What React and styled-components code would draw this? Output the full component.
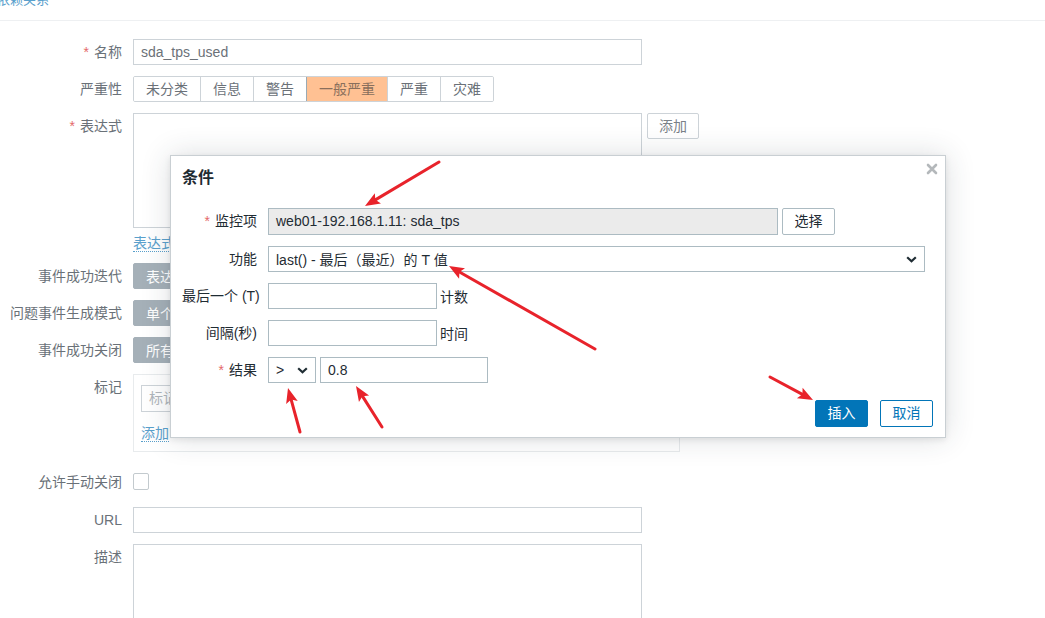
import React from 'react'
import styled, { createGlobalStyle } from 'styled-components'

const GlobalStyle = createGlobalStyle`
  html, body { margin: 0; padding: 0; background: #fff; }
  body {
    font-family: "Liberation Sans", "Noto Sans CJK SC", sans-serif;
    font-size: 14px;
    overflow: hidden;
  }
  * { box-sizing: border-box; }
`

const Page = styled.div`
  position: relative;
  width: 1045px;
  height: 618px;
  overflow: hidden;
`

const TabBar = styled.div`
  height: 21px;
  border-bottom: 1px solid #eef0f2;
  overflow: hidden;
`

const Tab = styled.a`
  display: block;
  margin: -9px 0 0 -3px;
  font-size: 13px;
  line-height: 18px;
  color: #5aa0cc;
`

const Form = styled.div`
  display: flex;
  flex-direction: column;
  gap: 11px;
  padding-top: 18px;
`

const Row = styled.div`
  display: grid;
  grid-template-columns: 122px 1fr;
  column-gap: 11px;
  margin-top: ${(p) => p.$shift || 0}px;
`

const Label = styled.div`
  text-align: right;
  line-height: 26px;
  color: #6a7178;
  white-space: nowrap;
`

const Req = styled.span`
  color: #e46a6a;
  margin-right: 5px;
`

const Field = styled.div`
  display: flex;
  flex-direction: column;
  align-items: flex-start;
`

const Input = styled.div`
  width: 509px;
  height: 26px;
  border: 1px solid #cdd3d8;
  padding: 0 7px;
  line-height: 24px;
  color: #6b7178;
  background: #fff;
`

const Segmented = styled.div`
  display: flex;
  height: 26px;
  border: 1px solid #cdd3d8;
  border-radius: 2px;
  overflow: hidden;
`

const Segment = styled.div`
  padding: 0 12px;
  line-height: 24px;
  color: ${(p) => (p.$active ? '#8a6f5c' : '#6b7178')};
  background: ${(p) => (p.$active ? '#ffc193' : '#fff')};
  border-left: 1px solid ${(p) => (p.$active ? '#9aaab4' : '#cdd3d8')};
  border-right: ${(p) => (p.$active ? '1px solid #9aaab4' : 'none')};
  margin-right: ${(p) => (p.$active ? '-1px' : '0')};
  &:first-child { border-left: none; }
`

const GraySegmented = styled.div`
  display: flex;
  height: 26px;
`

const GraySeg = styled.div`
  padding: 0 12px;
  line-height: 26px;
  white-space: nowrap;
  color: ${(p) => (p.$on ? '#fff' : '#6b7178')};
  background: ${(p) => (p.$on ? '#a5b0b8' : '#fff')};
  border: 1px solid ${(p) => (p.$on ? '#a5b0b8' : '#cdd3d8')};
  border-radius: 2px 0 0 2px;
`

const ExprLine = styled.div`
  display: flex;
  align-items: flex-start;
  gap: 5px;
`

const TextArea = styled.div`
  width: 509px;
  height: ${(p) => p.$h}px;
  border: 1px solid #cdd3d8;
  background: #fff;
`

const GhostButton = styled.div`
  width: 52px;
  height: 26px;
  border: 1px solid #cdd3d8;
  border-radius: 2px;
  text-align: center;
  line-height: 24px;
  color: #7a8188;
`

const LinkText = styled.a`
  display: inline-block;
  margin-top: ${(p) => p.$top}px;
  line-height: 16px;
  color: #5aa0cc;
  border-bottom: 1px dotted #5aa0cc;
`

const TagBox = styled.div`
  width: 547px;
  height: 78px;
  border: 1px solid #e8ebed;
  padding: 10px 7px;
  display: flex;
  flex-direction: column;
  align-items: flex-start;
`

const TagInput = styled.div`
  width: 180px;
  height: 27px;
  border: 1px solid #cdd3d8;
  padding: 0 7px;
  line-height: 25px;
  color: #b0b6bb;
`

const CheckBox = styled.div`
  width: 16px;
  height: 17px;
  margin-top: 4px;
  border: 1px solid #c3cace;
  border-radius: 2px;
`

/* ---------- dialog ---------- */

const Modal = styled.div`
  position: absolute;
  left: 170px;
  top: 155px;
  width: 776px;
  background: #fff;
  border: 1px solid #c9cfd3;
  box-shadow: 0 0 28px rgba(40, 50, 60, 0.16), 0 2px 6px rgba(0, 0, 0, 0.08);
  padding: 12px 11px 10px 11px;
`

const Title = styled.div`
  font-size: 16px;
  font-weight: bold;
  line-height: 20px;
  color: #1f2c33;
`

const Close = styled.div`
  position: absolute;
  right: 7px;
  top: 7px;
  width: 12px;
  height: 12px;
  display: flex;
`

const ModalBody = styled.div`
  margin-top: 20px;
  display: grid;
  grid-template-columns: 75px 1fr;
  column-gap: 11px;
  row-gap: 11px;
`

const MLabel = styled.div`
  text-align: right;
  line-height: ${(p) => p.$h || 26}px;
  color: #1f2c33;
  white-space: nowrap;
`

const MLine = styled.div`
  display: flex;
  align-items: center;
  gap: 4px;
  color: #1f2c33;
`

const MInput = styled.div`
  width: ${(p) => p.$w}px;
  height: ${(p) => p.$h || 26}px;
  border: 1px solid #acbbc2;
  background: ${(p) => (p.$readonly ? '#ebebeb' : '#fff')};
  padding: 0 7px;
  line-height: ${(p) => (p.$h || 26) - 2}px;
  color: #1f2c33;
  white-space: nowrap;
`

const MSelect = styled.div`
  width: ${(p) => p.$w}px;
  height: 26px;
  border: 1px solid #acbbc2;
  padding: 0 7px;
  display: flex;
  align-items: center;
  justify-content: space-between;
  color: #1f2c33;
  white-space: nowrap;
`

const MButton = styled.div`
  width: 53px;
  height: 27px;
  border: 1px solid ${(p) => (p.$primary ? '#0275b8' : '#acbbc2')};
  border-radius: 2px;
  background: ${(p) => (p.$primary ? '#0275b8' : '#fff')};
  color: ${(p) => (p.$primary ? '#fff' : '#1f2c33')};
  text-align: center;
  line-height: 25px;
`

const OutlineButton = styled(MButton)`
  border-color: #0275b8;
  color: #0275b8;
`

const Unit = styled.span`
  margin-left: -1px;
`

const Footer = styled.div`
  margin-top: 17px;
  display: flex;
  justify-content: flex-end;
  gap: 12px;
  padding-right: 1px;
`

const Overlay = styled.svg`
  position: absolute;
  left: 0;
  top: 0;
  pointer-events: none;
`

const Chevron = () => (
  <svg width="11" height="7" viewBox="0 0 11 7">
    <polyline points="1.2,1.2 5.5,5.3 9.8,1.2" fill="none" stroke="#1f2c33" strokeWidth="2.2" />
  </svg>
)

const Arrow = ({ from, to }) => {
  const [x1, y1] = from
  const [x2, y2] = to
  const dx = x2 - x1
  const dy = y2 - y1
  const len = Math.hypot(dx, dy)
  const ux = dx / len
  const uy = dy / len
  const head = 15
  const half = 6
  const bx = x2 - ux * head
  const by = y2 - uy * head
  const pts = [
    `${x2},${y2}`,
    `${bx - uy * half},${by + ux * half}`,
    `${bx + ux * 3},${by + uy * 3}`,
    `${bx + uy * half},${by - ux * half}`,
  ].join(' ')
  return (
    <g>
      <line x1={x1} y1={y1} x2={bx + ux * 3} y2={by + uy * 3} stroke="#e8232b" strokeWidth="3" strokeLinecap="round" />
      <polygon points={pts} fill="#e8232b" />
    </g>
  )
}

const severities = ['未分类', '信息', '警告', '一般严重', '严重', '灾难']

export default function App() {
  return (
    <Page>
      <GlobalStyle />
      <TabBar>
        <Tab>依赖关系</Tab>
      </TabBar>

      <Form>
        <Row>
          <Label><Req>*</Req>名称</Label>
          <Input>sda_tps_used</Input>
        </Row>

        <Row>
          <Label>严重性</Label>
          <Field>
            <Segmented>
              {severities.map((s) => (
                <Segment key={s} $active={s === '一般严重'}>{s}</Segment>
              ))}
            </Segmented>
          </Field>
        </Row>

        <Row>
          <Label><Req>*</Req>表达式</Label>
          <Field>
            <ExprLine>
              <TextArea $h={115} />
              <GhostButton>添加</GhostButton>
            </ExprLine>
            <LinkText $top={7}>表达式构造器</LinkText>
          </Field>
        </Row>

        <Row>
          <Label>事件成功迭代</Label>
          <GraySegmented>
            <GraySeg $on>表达式</GraySeg>
            <GraySeg>恢复表达式</GraySeg>
            <GraySeg>无</GraySeg>
          </GraySegmented>
        </Row>

        <Row>
          <Label>问题事件生成模式</Label>
          <GraySegmented>
            <GraySeg $on>单个</GraySeg>
            <GraySeg>多重</GraySeg>
          </GraySegmented>
        </Row>

        <Row>
          <Label>事件成功关闭</Label>
          <GraySegmented>
            <GraySeg $on>所有问题</GraySeg>
            <GraySeg>所有问题如果标签值匹配</GraySeg>
          </GraySegmented>
        </Row>

        <Row>
          <Label>标记</Label>
          <TagBox>
            <TagInput>标记</TagInput>
            <LinkText $top={13}>添加</LinkText>
          </TagBox>
        </Row>

        <Row $shift={6}>
          <Label>允许手动关闭</Label>
          <Field>
            <CheckBox />
          </Field>
        </Row>

        <Row $shift={1}>
          <Label>URL</Label>
          <Input />
        </Row>

        <Row>
          <Label>描述</Label>
          <TextArea $h={120} />
        </Row>
      </Form>

      <Modal>
        <Title>条件</Title>
        <Close>
          <svg width="12" height="12" viewBox="0 0 12 12">
            <path d="M2 2 L10 10 M10 2 L2 10" stroke="#b4b8bb" strokeWidth="2.6" strokeLinecap="round" />
          </svg>
        </Close>

        <ModalBody>
          <MLabel $h={27}><Req>*</Req>监控项</MLabel>
          <MLine>
            <MInput $w={510} $h={27} $readonly>web01-192.168.1.11: sda_tps</MInput>
            <MButton>选择</MButton>
          </MLine>

          <MLabel>功能</MLabel>
          <MLine>
            <MSelect $w={657}>
              <span>last() - 最后（最近）的 T 值</span>
              <Chevron />
            </MSelect>
          </MLine>

          <MLabel>最后一个 (T)</MLabel>
          <MLine>
            <MInput $w={169} />
            <Unit>计数</Unit>
          </MLine>

          <MLabel>间隔(秒)</MLabel>
          <MLine>
            <MInput $w={169} />
            <Unit>时间</Unit>
          </MLine>

          <MLabel><Req>*</Req>结果</MLabel>
          <MLine>
            <MSelect $w={48}>
              <span>&gt;</span>
              <Chevron />
            </MSelect>
            <MInput $w={168}>0.8</MInput>
          </MLine>
        </ModalBody>

        <Footer>
          <MButton $primary>插入</MButton>
          <OutlineButton>取消</OutlineButton>
        </Footer>
      </Modal>

      <Overlay width="1045" height="618">
        <Arrow from={[439, 162]} to={[365, 206]} />
        <Arrow from={[595, 349]} to={[449, 266]} />
        <Arrow from={[300, 432]} to={[288, 388]} />
        <Arrow from={[382, 427]} to={[356, 386]} />
        <Arrow from={[770, 377]} to={[813, 400]} />
      </Overlay>
    </Page>
  )
}
